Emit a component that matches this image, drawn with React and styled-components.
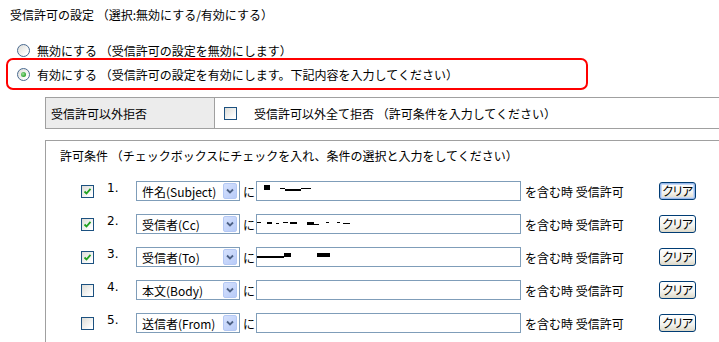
import React from "react";
import styled, { createGlobalStyle } from "styled-components";

const GlobalStyle = createGlobalStyle`
  html, body {
    margin: 0;
    overflow: hidden;
    background: #fff;
  }
  body {
    font-family: "Noto Sans CJK JP", "Noto Sans", sans-serif;
    font-size: 12px;
    color: #000;
  }
`;

const Page = styled.div`
  width: 719px;
  height: 342px;
  overflow: hidden;
`;

const Title = styled.div`
  padding: 8px 0 0 10px;
  line-height: 14px;
  height: 22px;
`;

const RadioRow = styled.label`
  display: flex;
  align-items: center;
  gap: 7px;
  height: 16px;
  padding-left: ${({ inset }) => inset}px;
  margin-top: ${({ top }) => top || 0}px;
  white-space: nowrap;
`;

const Highlight = styled.div`
  box-sizing: border-box;
  margin-left: 6px;
  width: 582px;
  height: 32px;
  border: 2px solid #f00;
  border-radius: 7px;
  display: flex;
  align-items: center;
`;

const RadioDot = styled.span`
  box-sizing: border-box;
  width: 13px;
  height: 13px;
  border-radius: 50%;
  border: 1px solid #4a6a90;
  background: linear-gradient(135deg, #dcdcd7 0%, #fff 80%);
  display: flex;
  align-items: center;
  justify-content: center;

  &::after {
    content: "";
    display: ${({ checked }) => (checked ? "block" : "none")};
    width: 5px;
    height: 5px;
    border-radius: 50%;
    background: radial-gradient(circle at 40% 40%, #9be29b 0%, #2da22d 70%);
  }
`;

const Table = styled.div`
  margin: 7px 0 0 45px;
  width: 690px;
  border-top: 1px solid #a0a0a0;
  border-bottom: 1px solid #a0a0a0;
  display: grid;
  grid-template-columns: 170px 1fr;
  height: 30px;
`;

const LabelCell = styled.div`
  box-sizing: border-box;
  background: #ececec;
  border-left: 1px solid #a0a0a0;
  border-right: 1px solid #a0a0a0;
  padding-left: 5px;
  display: flex;
  align-items: center;
`;

const ValueCell = styled.div`
  display: flex;
  align-items: center;
  padding-left: 9px;
  gap: 17px;
  white-space: nowrap;
`;

const Box = styled.div`
  margin: 11px 0 0 45px;
  width: 690px;
  height: 220px;
  border-top: 1px solid #a0a0a0;
  border-left: 1px solid #a0a0a0;
`;

const BoxTitle = styled.div`
  padding: 8px 0 0 14px;
  line-height: 14px;
  white-space: nowrap;
`;

const Rows = styled.div`
  margin-top: 18px;
  padding-left: 35px;
  display: flex;
  flex-direction: column;
  gap: 13px;
`;

const Row = styled.div`
  display: grid;
  grid-template-columns: 26px 29px 104px 16px 265px 138px 37px;
  align-items: center;
  height: 20px;
`;

const Check = styled.span`
  box-sizing: border-box;
  width: 13px;
  height: 13px;
  border: 1px solid #1c5180;
  background: linear-gradient(135deg, #dcdcd7 0%, #fff 85%);
  display: flex;
  align-items: center;
  justify-content: center;
`;

const Num = styled.span`
  align-self: start;
  font-family: "DejaVu Sans", sans-serif;
  font-size: 12px;
  line-height: 12px;
  margin-top: 1px;
`;

const Select = styled.div`
  box-sizing: border-box;
  height: 20px;
  border: 1px solid #7f9db9;
  display: flex;
  align-items: center;
  justify-content: space-between;
  padding-left: 5px;
  padding-right: 2px;
  white-space: nowrap;
  overflow: hidden;
`;

const SelectArrow = styled.span`
  box-sizing: border-box;
  flex: none;
  width: 14px;
  height: 16px;
  border-radius: 2px;
  border: 1px solid #b4c8f4;
  background: linear-gradient(135deg, #d5e1fd 0%, #b8cbf8 100%);
  display: flex;
  align-items: center;
  justify-content: center;
`;

const Ni = styled.span`
  padding-left: 3px;
`;

const Field = styled.div`
  box-sizing: border-box;
  height: 20px;
  border: 1px solid #7f9db9;
  background: #fff;
  display: flex;
  align-items: flex-start;
`;

const Bar = styled.span`
  display: block;
  flex: none;
  background: #000;
`;

const Suffix = styled.span`
  padding-left: 4px;
  white-space: nowrap;
`;

const ClearButton = styled.button`
  box-sizing: border-box;
  width: 37px;
  height: 18px;
  padding: 0;
  font: inherit;
  font-size: 12px;
  line-height: 14px;
  font-feature-settings: "palt";
  letter-spacing: -0.5px;
  white-space: nowrap;
  overflow: hidden;
  border: 1px solid #003c74;
  border-radius: 3px;
  background: linear-gradient(#ffffff 0%, #f3f3ef 60%, #dcd8c8 100%);
  box-shadow: ${({ focused }) =>
    focused ? "inset 0 0 0 1px #98b8ea, inset 0 0 0 2px #c6d8f5" : "none"};
  color: #000;
`;

const Chevron = () => (
  <svg width="8" height="6" viewBox="0 0 8 6">
    <path d="M1 1.5 L4 4.5 L7 1.5" fill="none" stroke="#4d6185" strokeWidth="1.8" />
  </svg>
);

const Tick = () => (
  <svg width="9" height="9" viewBox="0 0 9 9">
    <path d="M1.5 4.5 L3.5 6.5 L7.5 1.8" fill="none" stroke="#21a121" strokeWidth="1.8" />
  </svg>
);

// redaction marks: [x, y, w, h] relative to the field's inner box
const rows = [
  {
    checked: true,
    field: "件名(Subject)",
    marks: [[7, 3, 6, 5], [23, 6, 5, 1], [28, 7, 16, 2], [44, 6, 10, 1]],
    focused: true,
  },
  {
    checked: true,
    field: "受信者(Cc)",
    marks: [[0, 7, 4, 1], [10, 7, 5, 2], [19, 8, 3, 1], [26, 7, 5, 1], [33, 7, 7, 2], [50, 7, 7, 3], [57, 9, 5, 1], [69, 7, 3, 1], [80, 7, 3, 1], [86, 8, 7, 1]],
  },
  {
    checked: true,
    field: "受信者(To)",
    marks: [[0, 8, 27, 2], [27, 5, 7, 4], [60, 5, 13, 4]],
  },
  { checked: false, field: "本文(Body)", marks: [] },
  { checked: false, field: "送信者(From)", marks: [] },
];

function Marks({ marks }) {
  let cursor = 0;
  return marks.map(([x, y, w, h], i) => {
    const left = x - cursor;
    cursor = x + w;
    return <Bar key={i} style={{ marginLeft: left, marginTop: y, width: w, height: h }} />;
  });
}

export default function App() {
  return (
    <Page>
      <GlobalStyle />
      <Title>受信許可の設定 （選択:無効にする/有効にする）</Title>

      <RadioRow inset={17} top={12}>
        <RadioDot />
        <span>無効にする （受信許可の設定を無効にします）</span>
      </RadioRow>
      <Highlight>
        <RadioRow inset={9}>
          <RadioDot checked />
          <span>有効にする （受信許可の設定を有効にします。下記内容を入力してください）</span>
        </RadioRow>
      </Highlight>

      <Table>
        <LabelCell>受信許可以外拒否</LabelCell>
        <ValueCell>
          <Check />
          <span>受信許可以外全て拒否 （許可条件を入力してください）</span>
        </ValueCell>
      </Table>

      <Box>
        <BoxTitle>許可条件 （チェックボックスにチェックを入れ、条件の選択と入力をしてください）</BoxTitle>
        <Rows>
          {rows.map((r, i) => (
            <Row key={i}>
              <Check>{r.checked && <Tick />}</Check>
              <Num>{i + 1}.</Num>
              <Select>
                <span>{r.field}</span>
                <SelectArrow>
                  <Chevron />
                </SelectArrow>
              </Select>
              <Ni>に</Ni>
              <Field>
                <Marks marks={r.marks} />
              </Field>
              <Suffix>を含む時 受信許可</Suffix>
              <ClearButton focused={r.focused}>クリア</ClearButton>
            </Row>
          ))}
        </Rows>
      </Box>
    </Page>
  );
}
